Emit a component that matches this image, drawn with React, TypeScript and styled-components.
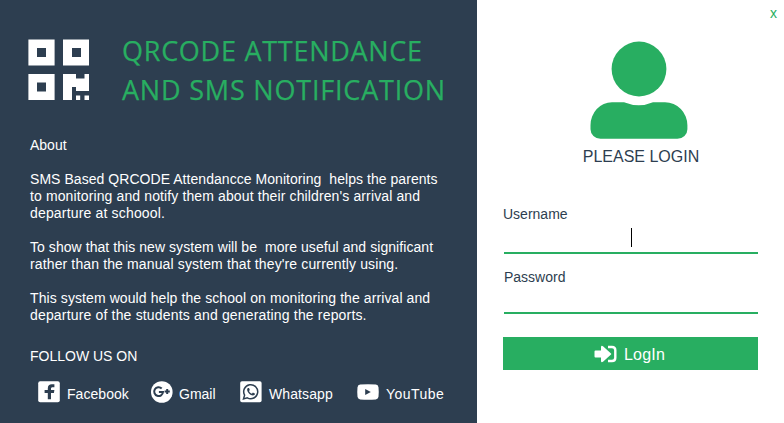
import React from 'react';
import styled, { createGlobalStyle } from 'styled-components';

const navy = '#2d3e50';
const green = '#28ae61';

const GlobalStyle = createGlobalStyle`
  *, *::before, *::after { box-sizing: border-box; }
  body { margin: 0; background: #fff; font-family: "Liberation Sans", Arial, sans-serif; }
  h1, h2, p { margin: 0; font-weight: 400; }
`;

const Window = styled.main`
  display: flex;
  width: 784px;
  height: 423px;
  overflow: hidden;
`;

const InfoPanel = styled.section`
  flex: 0 0 477px;
  background: ${navy};
  color: #fff;
  font-size: 14px;
  line-height: 17px;
`;

const Brand = styled.header`
  display: flex;
  gap: 32px;
  height: 137px;
  padding: 31px 0 0 28px;
  svg { flex: none; margin-top: 8px; }
`;

const Title = styled.h1`
  color: ${green};
  font: 400 27px/39px "Open Sans", "Noto Sans", sans-serif;
  -webkit-text-stroke: 0.25px ${green};
`;

const Line = styled.span<{ $track?: number }>`
  display: block;
  white-space: pre;
  letter-spacing: ${({ $track = 0 }) => $track}px;
`;

const About = styled.div`
  display: flex;
  flex-direction: column;
  gap: 17px;
  padding-left: 30px;
`;

const FollowTitle = styled.h2`
  padding: 24px 0 0 30px;
  font-size: 14px;
  line-height: 17px;
`;

const Socials = styled.div`
  display: grid;
  grid-template-columns: 113px 89px 117px 1fr;
  padding: 15px 0 0 37px;
`;

const Social = styled.div<{ $track?: number; $gap?: number }>`
  display: flex;
  gap: ${({ $gap = 6 }) => $gap}px;
  height: 24px;
  letter-spacing: ${({ $track = 0 }) => $track}px;
  svg { flex: none; }
  span { padding-top: 6px; }
`;

const LoginPanel = styled.section`
  flex: 1;
  display: flex;
  flex-direction: column;
  padding: 0 26px;
  background: #fff;
  color: ${navy};
`;

const Close = styled.button`
  display: flex;
  align-self: flex-end;
  margin-right: -20px;
  padding: 5px 0 0;
  width: 8px;
  height: 41px;
  border: 0;
  background: none;
  color: ${green};
  font: 14px/17px "Liberation Sans", Arial, sans-serif;
`;

const Profile = styled.div`
  display: flex;
  flex-direction: column;
  align-items: center;
  margin-left: 21px;
  svg { margin-left: -5px; }
`;

const Heading = styled.h2`
  margin-top: 9px;
  font-size: 16px;
  line-height: 18px;
`;

const Field = styled.label<{ $top: number; $height: number; $indent?: number }>`
  display: flex;
  flex-direction: column;
  margin-top: ${({ $top }) => $top}px;
  height: ${({ $height }) => $height}px;
  margin-left: 1px;
  border-bottom: 2px solid ${green};
  font-size: 14px;
  line-height: 17px;
  > span { margin-left: ${({ $indent = 0 }) => $indent}px; }
`;

const Entry = styled.div`
  display: flex;
  justify-content: center;
  margin-top: 5px;
  height: 19px;
`;

const Caret = styled.i`
  width: 1px;
  height: 19px;
  margin-left: 1px;
  background: #000;
`;

const LoginButton = styled.button`
  display: flex;
  align-items: center;
  gap: 7px;
  margin-top: 23px;
  padding: 0 0 0 91px;
  width: 255px;
  height: 33px;
  border: 0;
  background: ${green};
  color: #fff;
  font: 16px/18px "Liberation Sans", Arial, sans-serif;
  span { padding-top: 2px; letter-spacing: 0.2px; }
`;

const QrIcon = () => (
  <svg width="62" height="62" viewBox="0 0 62 62" fill="#fff">
    <path
      fillRule="evenodd"
      d="M.4.4h26.2v26.2H.4zM9 9v9h9V9zM35 .4h26v26.2H35zM44 9v9h9V9zM.4 35h26.2v26H.4zM9 43.4v9h9v-9z"
    />
    <path d="M35 35h13v4.5h8.500V35H61v17H48v-4h-4v13h-9z" />
    <path d="M48 56.4h4.2V61H48zM56.5 56.4H61V61h-4.500z" />
  </svg>
);

const FacebookIcon = () => (
  <svg width="24" height="24" viewBox="0 0 24 24">
    <rect x="1.2" y="1.2" width="21.6" height="21" rx="2" fill="#fff" />
    <path
      fill={navy}
      d="M10.800 19.300v-6.300H7.600V9.900h3.200V8.500c0-2.800 1.500-4.200 4-4.200h2.600v3h-1.700c-1.200 0-1.700.500-1.700 1.500v1.100h3.400l-.5 3.100h-2.900v6.300z"
    />
  </svg>
);

const GoogleIcon = () => (
  <svg width="24" height="24" viewBox="0 0 24 24">
    <circle cx="11.8" cy="12" r="10.8" fill="#fff" />
    <path
      d="M11.700 8.500a4.400 4.400 0 1 0 1.300 3.500H8.900M14.600 11.500h5.200M17.200 8.900v5.200"
      fill="none"
      stroke={navy}
      strokeWidth="2"
    />
  </svg>
);

const WhatsappIcon = () => (
  <svg width="24" height="24" viewBox="0 0 24 24">
    <rect x="1.2" y="1.2" width="21.4" height="21" rx="1.8" fill="#fff" />
    <path
      d="M4.5 18.9l1.1-3.8a7 7 0 1 1 2.7 2.7z"
      fill="none"
      stroke={navy}
      strokeWidth="1.5"
    />
    <path
      fill={navy}
      d="M9.2 8c-.8.4-1.2 1.2-1 2.2.5 2.5 3.2 5 5.7 5.2 1 0 2-.6 2.2-1.7l-2.2-1.1-1 1.1c-1.3-.5-2.3-1.4-2.9-2.7l.8-1L10 8z"
    />
  </svg>
);

const YoutubeIcon = () => (
  <svg width="24" height="24" viewBox="0 0 24 24">
    <path
      fill="#fff"
      d="M4.2 4.6q7.8-.7 15.6 0 2.4.3 2.7 2.7.5 4.7 0 9.4-.3 2.4-2.7 2.7-7.8.7-15.6 0-2.4-.3-2.7-2.7-.5-4.7 0-9.4.3-2.4 2.7-2.7z"
    />
    <path fill={navy} d="M9.2 8.9v6.2l5.6-3.1z" />
  </svg>
);

const PersonIcon = () => (
  <svg width="98" height="98" viewBox="0 0 98 98" fill={green}>
    <circle cx="49" cy="28" r="27.4" />
    <path d="M22 61.2h12q15 6 29 0h12a22.4 23 0 0 1 22.4 23v4a10 9.5 0 0 1-10 9.5H10.5a10 9.5 0 0 1-10-9.5v-4A22 23 0 0 1 22 61.2z" />
  </svg>
);

const EnterIcon = () => (
  <svg width="23" height="20" viewBox="0 0 23 20">
    <path fill="#fff" d="M1.5 6.500H7V3q.2-2 2-.8l8 7.200q.6.600 0 1.200l-8 7.200q-1.800 1.200-2-.8v-3.500H1.500Q.5 13.500.5 12.500V7.500q0-1 1-1z" />
    <path
      d="M14 3h4q3.300 0 3.300 3.300v7.400q0 3.300-3.300 3.300h-4"
      fill="none"
      stroke="#fff"
      strokeWidth="2.4"
    />
  </svg>
);

export default function App() {
  return (
    <>
      <GlobalStyle />
      <Window>
        <InfoPanel>
          <Brand>
            <QrIcon />
            <Title>
              <Line $track={0.73}>QRCODE ATTENDANCE</Line>
              <Line $track={0.8}>AND SMS NOTIFICATION</Line>
            </Title>
          </Brand>
          <About>
            <p>About</p>
            <p>
              <Line $track={0.05}>{'SMS Based QRCODE Attendancce Monitoring  helps the parents'}</Line>
              <Line $track={0.12}>to monitoring and notify them about their children's arrival and</Line>
              <Line $track={0.17}>departure at schoool.</Line>
            </p>
            <p>
              <Line $track={0.06}>{'To show that this new system will be  more useful and significant'}</Line>
              <Line $track={0.13}>rather than the manual system that they're currently using.</Line>
            </p>
            <p>
              <Line $track={0.09}>This system would help the school on monitoring the arrival and</Line>
              <Line $track={0.17}>departure of the students and generating the reports.</Line>
            </p>
          </About>
          <FollowTitle>FOLLOW US ON</FollowTitle>
          <Socials>
            <Social $track={0.05}><FacebookIcon /><span>Facebook</span></Social>
            <Social $gap={5}><GoogleIcon /><span>Gmail</span></Social>
            <Social $track={0.1}><WhatsappIcon /><span>Whatsapp</span></Social>
            <Social $track={0.45}><YoutubeIcon /><span>YouTube</span></Social>
          </Socials>
        </InfoPanel>
        <LoginPanel>
          <Close aria-label="Close">x</Close>
          <Profile>
            <PersonIcon />
            <Heading>PLEASE LOGIN</Heading>
          </Profile>
          <Field $top={40} $height={48} $indent={-1}>
            <span>Username</span>
            <Entry><Caret /></Entry>
          </Field>
          <Field $top={15} $height={45}>
            <span>Password</span>
          </Field>
          <LoginButton><EnterIcon /><span>LogIn</span></LoginButton>
        </LoginPanel>
      </Window>
    </>
  );
}
